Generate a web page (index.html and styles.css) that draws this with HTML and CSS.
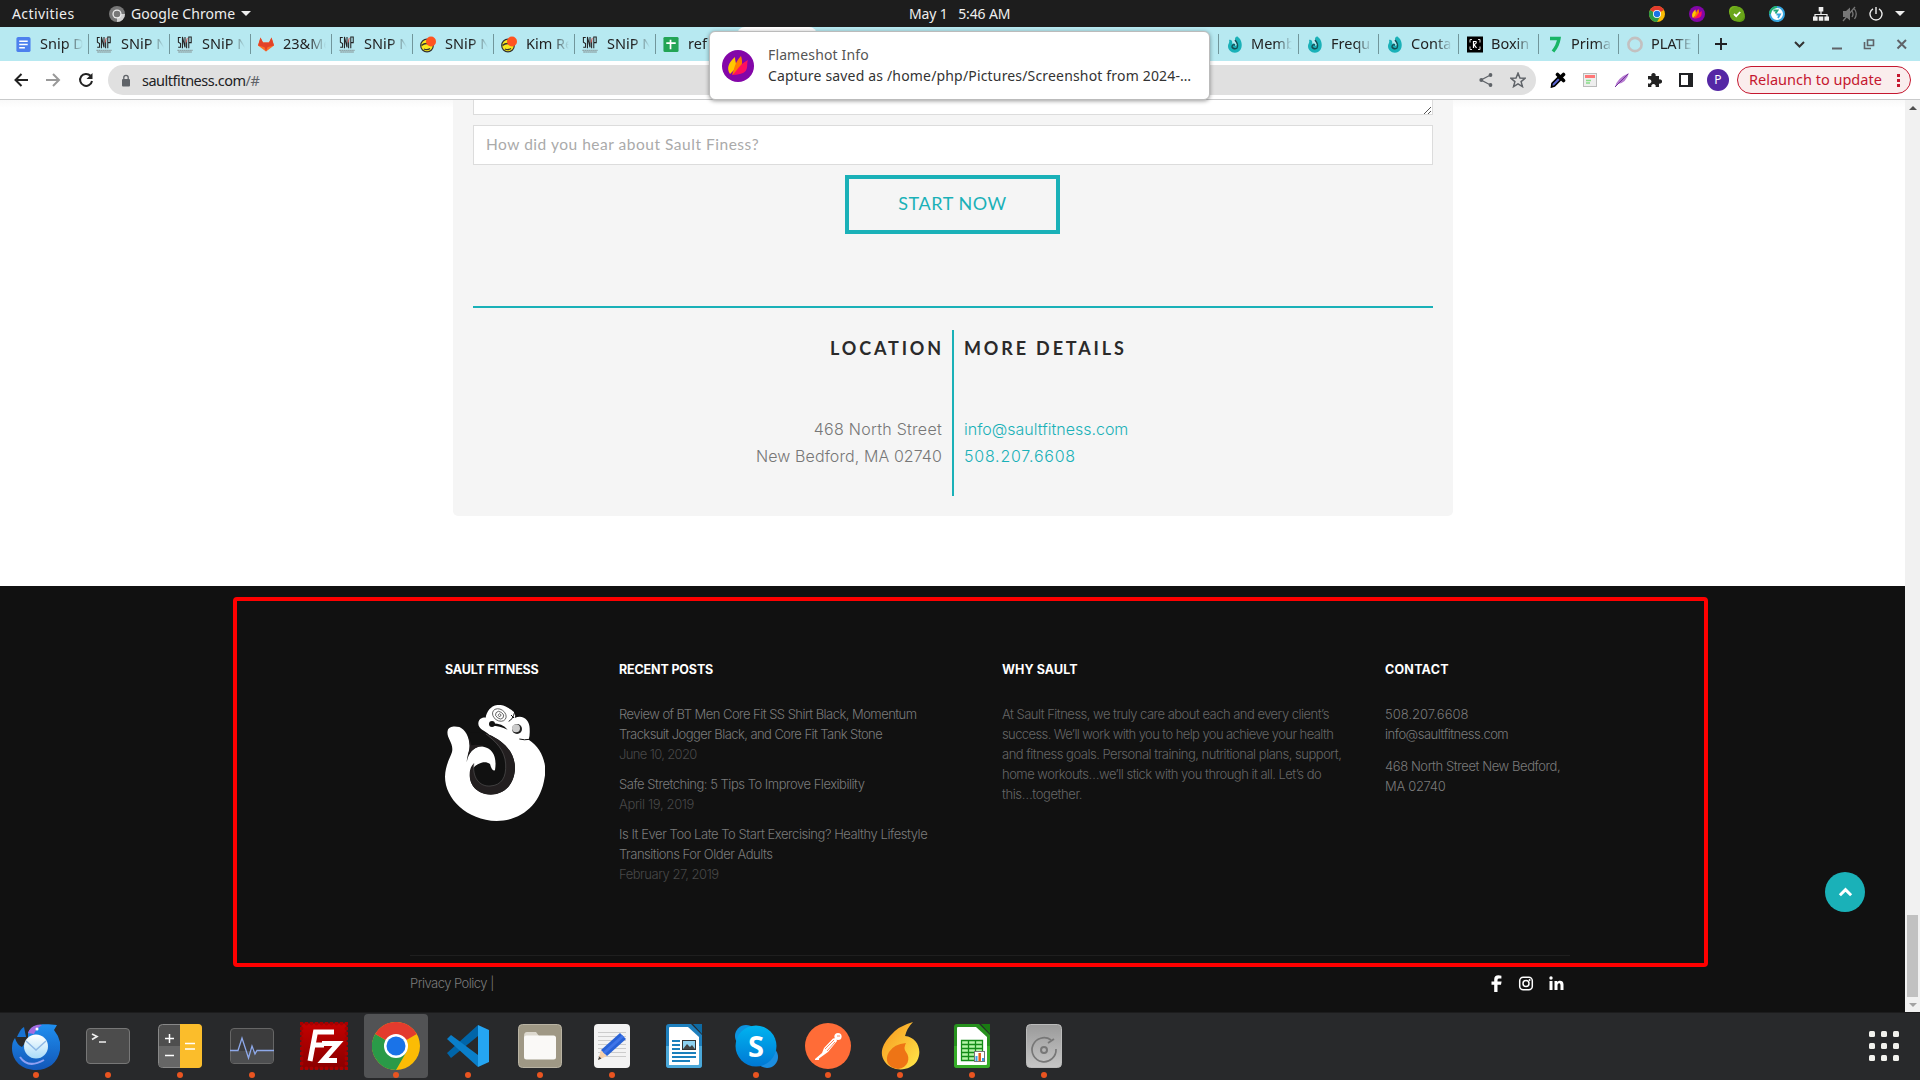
FILE: index.html
```html
<!DOCTYPE html>
<html lang="en">
<head>
<meta charset="utf-8">
<title>Sault Fitness</title>
<link rel="stylesheet" href="styles.css">
</head>
<body>
<svg class="defs" width="0" height="0">
  <defs>
    <linearGradient id="bird" x1="0" y1="0" x2="0" y2="1"><stop offset="0" stop-color="#1f8ff0"/><stop offset="1" stop-color="#1257b8"/></linearGradient>
    <linearGradient id="mail" x1="0" y1="0" x2="0" y2="1"><stop offset="0" stop-color="#ffffff"/><stop offset="1" stop-color="#a9dcf8"/></linearGradient>
    <linearGradient id="red" x1="0" y1="0" x2="0" y2="1"><stop offset="0" stop-color="#c40000"/><stop offset="1" stop-color="#8a0000"/></linearGradient>
    <linearGradient id="sky" x1="0" y1="0" x2="0" y2="1"><stop offset="0" stop-color="#00b4f0"/><stop offset="1" stop-color="#0078d4"/></linearGradient>
    <linearGradient id="fire" x1="0" y1="0" x2="1" y2="1"><stop offset="0" stop-color="#f7941d"/><stop offset="1" stop-color="#ffe94a"/></linearGradient>
    <linearGradient id="disk" x1="0" y1="0" x2="0" y2="1"><stop offset="0" stop-color="#9a9a9a"/><stop offset="1" stop-color="#c6c6c6"/></linearGradient>
    <symbol id="chrome" viewBox="0 0 48 48">
      <circle cx="24" cy="24" r="24" fill="#fbbc05"/>
      <path d="M24 24L3.2 12A24 24 0 0 0 24 48L34.4 30Z" fill="#2a9a48"/>
      <path d="M24 24L3.2 12A24 24 0 0 1 44.8 12Z" fill="#e33b2e"/>
      <circle cx="24" cy="24" r="12" fill="#fff"/><circle cx="24" cy="24" r="9.5" fill="#1a73e8"/>
    </symbol>
    <symbol id="flame" viewBox="0 0 32 32">
      <circle cx="16" cy="16" r="16" fill="#8306a8"/>
      <path d="M8 24C4 18 7 12 13 7C13 12 15 14 14 18Z" fill="#ffc800"/>
      <path d="M10 25C13 17 13 12 19 6C21 12 20 16 18 20Z" fill="#ff7a00"/>
      <path d="M10 25C15 22 16 15 26 10C24 14 28 22 18 24Q14 25 10 25Z" fill="#ff0f5f"/>
    </symbol>
    <symbol id="snip" viewBox="0 0 16 18">
      <g fill="none" stroke="#222" stroke-width="1.1"><path d="M3.5 1.5H1V6.5L3.3 8V12H.8M5.3 13V1L8 12V1M9.7 4V13M12 13V1H14.6V7H12"/></g>
      <path d="M10.5 2L9 7" stroke="#e35e5e"/><path d="M0 15.2H16M1 17H15" stroke="#8a9a9c" stroke-width="1.5" stroke-dasharray="1.5 .6"/>
    </symbol>
    <symbol id="monkey" viewBox="0 0 16 16">
      <circle cx="7" cy="9" r="6.3" fill="#f8e71c" stroke="#333" stroke-width="1.2"/><path d="M1.500 9Q6 5 12 9M4 12.5Q7 14 10 12" fill="none" stroke="#333" stroke-width="1.3"/>
      <circle cx="11" cy="5" r="5" fill="#ff5420"/>
    </symbol>
    <symbol id="hook" viewBox="0 0 14 17">
      <path d="M1 4C3 3 5 5 4 8C6 6 8 8 7 10L9 9L7 3C7 1 9 0 10 1L12 3C15 8 14 14 10 16C5 18 0 15 0 10C0 8 2 6 1 4Z" fill="#1ab1b8"/><path d="M7 4Q11 9 9 12Q6 14 4 11Q4 8 7 9" fill="none" stroke="#174e55" stroke-width="1.4"/>
    </symbol>
  </defs>
</svg>

<div class="desktop">
  <header class="topbar">
    <span class="activities">Activities</span>
    <svg class="app-dot" viewBox="0 0 16 16"><circle cx="8" cy="8" r="8" fill="#777"/><path d="M8 8H16A8 8 0 0 1 8 16Z" fill="#d0d0d0"/><circle cx="8" cy="8" r="4.6" fill="#eee"/><circle cx="8" cy="8" r="3.3" fill="#777"/></svg>
    <span class="app-name">Google Chrome</span><i class="caret"></i>
    <span class="clock">May 1 &nbsp; 5:46 AM</span>
    <div class="tray">
      <svg width="16" height="16"><use href="#chrome"/></svg>
      <svg width="16" height="16"><use href="#flame"/></svg>
      <svg width="16" height="16" viewBox="0 0 16 16"><rect width="11" height="11" rx="5" fill="#79b51c"/><rect x="5" y="5" width="11" height="11" rx="5" fill="#5d9b12"/><circle cx="8" cy="8" r="7.4" fill="#6aa61a"/><path d="M5 8L7.2 10.2L11.2 6" stroke="#fff" stroke-width="1.8" fill="none"/></svg>
      <svg width="16" height="16" viewBox="0 0 16 16"><circle cx="8" cy="8" r="7" fill="#fff" stroke="#36a5df" stroke-width="2"/><path d="M1 8A7 7 0 0 1 8 1" fill="none" stroke="#23b26d" stroke-width="2"/><path d="M4.500 4.500H8.500L6.500 7.500" fill="none" stroke="#22a77c" stroke-width="1.8"/><path d="M7.500 8.500H11L9 12" fill="none" stroke="#36a5df" stroke-width="1.8"/></svg>
      <svg class="net" width="16" height="14" viewBox="0 0 16 14"><path d="M8 4V8M2 10V7.5H14V10" fill="none" stroke="#eee" stroke-width="1.2"/><path d="M5.7 0h4.6v4.6H5.7zM0 9.5h4.6v4.2H0zM5.8 9.5h4.5v4.2H5.8zM11.4 9.5H16v4.2h-4.6z" fill="#eee"/></svg>
      <svg width="16" height="16" viewBox="0 0 16 16"><path d="M1 5H4L8 1.5V14.5L4 11H1Z" fill="#777"/><path d="M10 5Q12 8 10 11M12.5 3Q16 8 12.5 13M1 15L13 1" fill="none" stroke="#777" stroke-width="1.3"/></svg>
      <svg class="power" width="14" height="14" viewBox="0 0 14 14"><path d="M4 1.8A6 6 0 1 0 10 1.8M7 0V7" fill="none" stroke="#eee" stroke-width="1.4"/></svg>
      <i class="caret"></i>
    </div>
  </header>

  <nav class="tabs">
    <div class="tab"><svg viewBox="0 0 16 18"><rect x="1" y="1" width="15" height="16" rx="2" fill="#4d80ee"/><path d="M4 5.5H13M4 9H13M4 12.5H10" stroke="#fff" stroke-width="1.6"/></svg><span>Snip D</span></div>
    <div class="tab"><svg><use href="#snip"/></svg><span>SNiP N</span></div>
    <div class="tab"><svg><use href="#snip"/></svg><span>SNiP N</span></div>
    <div class="tab"><svg viewBox="0 0 16 16"><path d="M8 15L0 9L2.5 1L5 6H11L13.5 1L16 9Z" fill="#fc6d26"/><path d="M8 15L5 6H11Z" fill="#e24329"/><path d="M0 9L2.5 1L5 6L8 9L11 6L13.5 1L16 9L8 11Z" fill="#e24329"/></svg><span>23&amp;Me</span></div>
    <div class="tab"><svg><use href="#snip"/></svg><span>SNiP N</span></div>
    <div class="tab"><svg><use href="#monkey"/></svg><span>SNiP N</span></div>
    <div class="tab"><svg><use href="#monkey"/></svg><span>Kim Re</span></div>
    <div class="tab"><svg><use href="#snip"/></svg><span>SNiP N</span></div>
    <div class="tab bare"><svg viewBox="0 0 16 18"><rect y="1" width="16" height="16" rx="1.5" fill="#23a455"/><path d="M7.5 4V14M3 7.5H13" stroke="#fff" stroke-width="1.8"/></svg><span>ref</span></div>
    <div class="tab-active"></div>
    <div class="tab-gap"></div>
    <div class="tab late"><svg><use href="#hook"/></svg><span>Memb</span></div>
    <div class="tab late"><svg><use href="#hook"/></svg><span>Frequ</span></div>
    <div class="tab late"><svg><use href="#hook"/></svg><span>Conta</span></div>
    <div class="tab late"><svg viewBox="0 0 16 16"><rect width="16" height="16"/><path d="M6.500 11.500V5H9Q10 7 7 8L9.500 11.500" fill="none" stroke="#fff" stroke-width="1.2"/><path d="M5 3H3V6M3 10V13H5M11 3H13V6M13 10V13H11" fill="none" stroke="#ddd"/></svg><span>Boxin</span></div>
    <div class="tab late"><svg viewBox="0 0 16 16"><path d="M3 2H12Q11 9 6 15" fill="none" stroke="#18b566" stroke-width="3.4"/></svg><span>Prima</span></div>
    <div class="tab late"><svg viewBox="0 0 16 16"><circle cx="8" cy="8" r="6.6" fill="none" stroke="#c3c0c0" stroke-width="2.6"/></svg><span>PLATE</span></div>
    <svg class="plus" viewBox="0 0 12 12"><path d="M6 0V12M0 6H12" stroke="#202124" stroke-width="1.9"/></svg>
    <svg class="winctl" viewBox="0 0 120 16"><g fill="none" stroke-width="2"><path d="M2 6L6.5 10.5L11 6" stroke="#333"/><path d="M39 12.5H49" stroke="#5f6368"/><path d="M74.500 4H80.500V9.500H74.500ZM71.500 6V12.500H78" stroke="#5f6368" stroke-width="1.6"/><path d="M104.500 4L113 12.500M113 4L104.500 12.500" stroke="#5f6368"/></g></svg>
  </nav>

  <div class="toolbar">
    <svg class="arrows" viewBox="0 0 84 16"><g fill="none" stroke-width="2"><path d="M14 8H2M7.500 2L1.500 8L7.500 14" stroke="#222"/><path d="M32 8H45M39 2L45 8L39 14" stroke="#999"/><path d="M76.500 3.800A6 6 0 1 0 78 9" stroke="#222"/></g><path d="M78.500 1V7H72.500Z" fill="#222"/></svg>
    <div class="omnibox">
      <svg class="lock" viewBox="0 0 8 12"><rect y="4.500" width="8" height="7.500" rx="1" fill="#5f6368"/><path d="M1.800 5V3Q1.800 .8 4 .8T6.200 3V5" fill="none" stroke="#5f6368" stroke-width="1.300"/></svg>
      <span class="url">saultfitness.com<b>/#</b></span>
      <svg class="share" viewBox="0 0 14 14"><path d="M11.500 2L2 7L11.500 12" fill="none" stroke="#5f6368" stroke-width="1.300"/><g fill="#5f6368"><circle cx="11.500" cy="2" r="1.900"/><circle cx="2.300" cy="7" r="1.900"/><circle cx="11.500" cy="12" r="1.900"/></g></svg>
      <svg class="star" viewBox="0 0 14 14"><path d="M7 1L8.700 5.200L13.200 5.500L9.700 8.400L10.900 12.800L7 10.400L3.100 12.800L4.300 8.400L.8 5.500L5.300 5.200Z" fill="none" stroke="#5f6368" stroke-width="1.300"/></svg>
    </div>
    <div class="ext">
      <svg viewBox="0 0 16 16"><path d="M1.500 15L2 11.500L8.500 5L11 7.500L4.500 14Z" fill="#5c67d6" stroke="#000" stroke-width="1.600"/><path d="M7.500 2.500L13.500 8.500M10 6L13.500 2.500" stroke="#000" stroke-width="3.600" stroke-linecap="round"/></svg>
      <svg viewBox="0 0 16 16"><rect x="1.500" y="1.500" width="13" height="13" fill="#eee" stroke="#bbb"/><rect x="3" y="3" width="10" height="3" fill="#f77"/><path d="M4 8.500H9M4 11H8" stroke="#8d8" stroke-width="1.500"/></svg>
      <svg viewBox="0 0 16 16"><path d="M1 15Q3 6 15 1Q12 11 4 12Z" fill="#b57ad0"/><path d="M1 15L14 2" stroke="#74349b"/></svg>
      <svg viewBox="0 0 16 16"><path d="M2 4H5.500A2.200 2.200 0 1 1 9.500 4H13V7.500A2.200 2.200 0 1 1 13 11.500V15H9.500A2.200 2.200 0 1 0 5.500 15H2V11.300A2.200 2.200 0 1 0 2 7.500Z" fill="#222"/></svg>
      <svg viewBox="0 0 16 16"><path d="M2 2H14V14H2Z" fill="#fff" stroke="#202124" stroke-width="2"/><path d="M10 2H14V14H10Z" fill="#202124"/></svg>
    </div>
    <span class="avatar">P</span>
    <span class="relaunch"><em>Relaunch to update</em><i></i></span>
  </div>

  <div class="viewport">
    <main class="page">
      <section class="panel">
        <div class="textarea"><svg viewBox="0 0 8 8"><path d="M0 8L7 1M4 8L7 5" stroke="#555"/></svg></div>
        <div class="input"><span>How did you hear about Sault Finess?</span></div>
        <div class="start"><span>START NOW</span></div>
        <div class="info">
          <div class="loc"><h3>LOCATION</h3><p><span class="a1">468 North Street</span></p><p><span class="a2">New Bedford, MA 02740</span></p></div>
          <div class="more"><h3>MORE DETAILS</h3><p><span class="a3">info@saultfitness.com</span></p><p><span class="a4">508.207.6608</span></p></div>
        </div>
      </section>
      <footer class="footer">
        <div class="marked"></div>
        <div class="cols">
          <div>
            <h4 class="h-a">SAULT FITNESS</h4>
            <svg class="logo" viewBox="45 45 300 348">
              <path d="M112 125Q122 140 122 166L170 160Q200 180 196 242Q190 240 180 218L130 225L120 260L150 312L240 305L260 210L180 132Z" fill="#111"/>
              <path d="M53 122C56 108 74 108 88 111C106 118 118 142 119 168C119 180 112 194 110 217C116 186 134 166 160 170C186 174 202 198 195 240C190 245 184 238 180 222C160 208 128 226 120 252C117 288 145 313 182 313C224 314 254 282 255 235C254 180 214 150 178 134C164 122 144 116 145 100C146 86 158 82 167 83C170 64 184 42 212 45C230 48 246 60 252 66Q258 74 254 84C280 72 300 92 299 118Q300 138 296 149C334 172 352 220 344 262C332 346 272 393 200 393C110 390 45 326 45 260C46 226 60 204 66 186C72 158 48 144 53 122Z" fill="#fff"/>
              <path d="M160 128C215 145 256 185 255 235C252 285 222 314 182 314C145 313 119 288 119 255C119 236 124 228 132 220C126 262 148 290 180 288C215 286 229 262 227 222C224 180 198 155 160 128Z" fill="#231f20"/>
              <path d="M132 220C126 262 148 290 180 288C215 286 229 262 227 222C224 180 198 155 168 132" fill="none" stroke="#666" stroke-width="1.500"/>
              <path d="M116 140Q122 156 124 166Q140 162 160 168Q134 168 114 196Q120 178 119 166Z" fill="#231f20"/>
              <circle cx="186" cy="102" r="9" fill="#111"/><path d="M186 100Q215 99 233 119Q208 107 186 107Z" fill="#111"/>
              <circle cx="261" cy="117" r="15" fill="#222"/><circle cx="258" cy="115" r="12" fill="#ccc"/>
              <path d="M268 147Q284 151 298 148M254 66Q249 88 236 94M243 75L252 84" fill="none" stroke="#111" stroke-width="3"/>
              <g fill="none" stroke="#555" stroke-width="2.500" transform="rotate(35 208 75)"><ellipse cx="208" cy="75" rx="22" ry="17"/><ellipse cx="209" cy="75" rx="13" ry="10"/><circle cx="209" cy="75" r="4"/></g>
            </svg>
          </div>
          <div>
            <h4 class="h-b">RECENT POSTS</h4>
            <ul class="posts">
              <li><a class="t1">Review of BT Men Core Fit SS Shirt Black, Momentum</a><a class="t2">Tracksuit Jogger Black, and Core Fit Tank Stone</a><time class="t3">June 10, 2020</time></li>
              <li><a class="t4">Safe Stretching: 5 Tips To Improve Flexibility</a><time class="t5">April 19, 2019</time></li>
              <li><a class="t6">Is It Ever Too Late To Start Exercising? Healthy Lifestyle</a><a class="t7">Transitions For Older Adults</a><time class="t8">February 27, 2019</time></li>
            </ul>
          </div>
          <div>
            <h4 class="h-c">WHY SAULT</h4>
            <p class="why"><span class="w1">At Sault Fitness, we truly care about each and every client’s</span><span class="w2">success. We’ll work with you to help you achieve your health</span><span class="w3">and fitness goals. Personal training, nutritional plans, support,</span><span class="w4">home workouts…we’ll stick with you through it all. Let’s do</span><span class="w5">this…together.</span></p>
          </div>
          <div>
            <h4 class="h-d">CONTACT</h4>
            <p class="contact"><span class="c1">508.207.6608</span><span class="c2">info@saultfitness.com</span></p>
            <p class="contact"><span class="c3">468 North Street New Bedford,</span><span class="c4">MA 02740</span></p>
          </div>
        </div>
        <div class="legal">
          <span><a>Privacy Policy</a> |</span>
          <svg viewBox="0 0 80 18"><path d="M6.500 17V9.800H10L10.600 6.600H6.500V4.900Q6.500 3.500 8.200 3.500H10.400V.7Q3.200 -.8 3.200 4.300V6.600H.5V9.800H3.200V17Z" fill="#fff"/><rect x="28.700" y="2.200" width="12.600" height="12.600" rx="3.500" fill="none" stroke="#fff" stroke-width="1.500"/><circle cx="35" cy="8.500" r="3" fill="none" stroke="#fff" stroke-width="1.500"/><circle cx="38.600" cy="4.900" r="1" fill="#fff"/><path d="M58.500 6H61.500V15H58.500ZM63.500 6H66.300V7.300C68 5 72.500 5.300 72.500 9.500V15H69.500V10.300C69.500 7.500 66.500 7.700 66.500 10.300V15H63.500Z" fill="#fff"/><circle cx="60" cy="3" r="1.700" fill="#fff"/></svg>
        </div>
      </footer>
      <div class="totop"><svg viewBox="0 0 16 10"><path d="M2 8.500L8 2.500L14 8.500" fill="none" stroke="#fff" stroke-width="3.200"/></svg></div>
    </main>
    <div class="scrollbar"><i class="up"></i><div class="thumb"></div><i class="down"></i></div>
  </div>

  <div class="dock">
    <div class="item on"><svg viewBox="0 0 48 48"><path d="M5 15C8 8 10 6 12 5L14 15Z" fill="#1873d3"/><path d="M16 11C19 3 28 1 45 3L42 8Q50 18 48 28C46 41 36 48 24 48C10 48 0 39 0 26Q0 20 3 16Q5 23 10 25L16 17Z" fill="url(#bird)"/><path d="M16 11C19 3 26 2 30 3Q24 7 22 12Z" fill="#a36be0"/><circle cx="25" cy="7" r="1.500" fill="#fff"/><path d="M8 35Q16 47 32 38" stroke="#8fa0f2" stroke-width="2" fill="none"/><circle cx="24" cy="24.500" r="12" fill="url(#mail)"/><path d="M14 19L24 28L34 19" fill="none" stroke="#8eb8e6" stroke-width="1.500"/></svg></div>
    <div class="item on"><svg viewBox="0 0 48 48"><rect x="2.500" y="6.500" width="43" height="35" rx="3.500" fill="#4c4c4c" stroke="#777"/><path d="M8 12L13 14.500L8 17.500M15 20H22" stroke="#eee" stroke-width="1.700" fill="none"/></svg></div>
    <div class="item on"><svg viewBox="0 0 48 48"><rect x="2.500" y="2.500" width="43" height="43" rx="4" fill="#4e4e4e" stroke="#888"/><path d="M3 24H24V45H6Q3 45 3 42Z" fill="#666"/><path d="M24 2H42Q46 2 46 6V42Q46 46 42 46H24Z" fill="#fbbd2b"/><path d="M9 16.500H18M13.500 12V21M9 33.500H18M29 21.500H39M29 27H39" stroke="#fff" stroke-width="1.500"/></svg></div>
    <div class="item on"><svg viewBox="0 0 48 48"><rect x="2.500" y="6.500" width="43" height="35" rx="3.500" fill="#3c3c3d" stroke="#666"/><path d="M3 29H45V38Q45 41 42 41H6Q3 41 3 38Z" fill="#4d4e50"/><path d="M2 28.500H10L14 16L20.500 36L24 24L27 32L29 28.500H46" stroke="#8ea9ea" stroke-width="1.300" fill="none"/></svg></div>
    <div class="item"><svg viewBox="0 0 48 48"><rect x="1.500" y="1.500" width="45" height="45" fill="url(#red)"/><rect x="1.500" y="1.500" width="45" height="45" fill="none" stroke="#a80000" stroke-width="4" stroke-linecap="round" stroke-dasharray="0 5"/><g stroke="#fff" fill="none"><path d="M10 39L15.500 10H34M13 23H24" stroke-width="5"/><path d="M22 21.500H38L23 38.500H37" stroke-width="5"/></g></svg></div>
    <div class="item on current"><svg><use href="#chrome"/></svg></div>
    <div class="item on"><svg viewBox="0 0 48 48"><path d="M3 31L34 3V14L7 36Z" fill="#0065a9"/><path d="M3 17L7 13L34 33V45Z" fill="#0a7fca"/><path d="M34 3L45 8V40L34 45Z" fill="#25a5f2"/></svg></div>
    <div class="item on"><svg viewBox="0 0 48 48"><rect x="2.500" y="2.500" width="43" height="43" rx="4" fill="#9f9885" stroke="#b9b3a3"/><path d="M8 14Q8 10 11 10H20L23 14H38V25H8Z" fill="#ddd9cf"/><rect x="8" y="13.500" width="32" height="24" rx="2.500" fill="#faf9f7"/></svg></div>
    <div class="item on"><svg viewBox="0 0 48 48"><rect x="6" y="2" width="36" height="44" rx="4" fill="#f3f3f3"/><path d="M10 10.500H38M10 14.500H38M10 18.500H38M10 22.500H38M10 26.500H38M10 30.500H38M10 34.500H38" stroke="#ccc"/><path d="M10 38L13 28L19 34Z" fill="#f5cfa9"/><path d="M10 38L11.200 34.500L13.500 36.500Z" fill="#444"/><path d="M13 28L32 11L38 17L19 34Z" fill="#2962d6"/><path d="M15 30L34 13L36 15L17 32Z" fill="#3f74e8"/></svg></div>
    <div class="item"><svg viewBox="0 0 48 48"><path d="M6 5Q6 2 9 2H31L42 13V43Q42 46 39 46H9Q6 46 6 43Z" fill="#1e7fbd"/><path d="M6 24H42V43Q42 46 39 46H9Q6 46 6 43Z" fill="#4ba8d9"/><path d="M9 6Q9 5 10 5H28L39 15V42Q39 43 38 43H9Z" fill="#fff"/><path d="M33 2H42V12Z" fill="#0e6aa3"/><path d="M12 19H20M12 23H20M12 27H20M12 31H36M12 35H36M12 39H30" stroke="#1b80bc" stroke-width="1.800"/><rect x="22.500" y="18.500" width="13" height="9" fill="#8ed1f0" stroke="#333"/><path d="M23 27L27 22L30 25L32 23L35 27Z" fill="#444"/></svg></div>
    <div class="item on"><svg viewBox="0 0 48 48"><circle cx="14" cy="14" r="11" fill="#0d93df"/><circle cx="35" cy="35" r="11" fill="#1b8de0"/><circle cx="24" cy="24" r="20.500" fill="url(#sky)"/><text x="24" y="34.500" text-anchor="middle" font-family="Open Sans" font-weight="700" font-size="29" fill="#fff">S</text></svg></div>
    <div class="item on"><svg viewBox="0 0 48 48"><circle cx="24" cy="24" r="23" fill="#ff6c37"/><circle cx="34" cy="14.500" r="3.600" fill="#fff"/><path d="M32 16L29 16.500L20 26L18 31L11 37V38H15V36.500L24 30L33 19Z" fill="#fff"/><path d="M21 27L30 18M23 29L31 20M33 14H36" stroke="#ff6c37" stroke-width=".8"/></svg></div>
    <div class="item on"><svg viewBox="0 0 48 48"><path d="M37 0Q22 4 14 14C6 23 3 32 9 40C16 50 34 50 41 39C47 28 41 15 29 14Q31 6 37 0Z" fill="url(#fire)"/><path d="M30 21Q18 22 13 30C8 38 12 46 22 47C32 46 35 36 30 30Q27 26 30 21Z" fill="#ee7415"/></svg></div>
    <div class="item on"><svg viewBox="0 0 48 48"><path d="M6 5Q6 2 9 2H31L42 13V43Q42 46 39 46H9Q6 46 6 43Z" fill="#27911e"/><path d="M6 24H42V43Q42 46 39 46H9Q6 46 6 43Z" fill="#37ad29"/><path d="M9 6Q9 5 10 5H28L39 15V42Q39 43 38 43H9Z" fill="#fff"/><path d="M33 2H42V12Z" fill="#197a12"/><path d="M13.500 18.500H34.500V38.500H13.500ZM13.500 22.500H34.500M13.500 26.500H34.500M13.500 30.500H34.500M13.500 34.500H34.500M20.500 18.500V38.500M27.500 18.500V38.500" fill="#b5f5a8" stroke="#148c18" stroke-width="1.300"/><rect x="26.500" y="29.500" width="10" height="10" fill="#fff" stroke="#777"/><path d="M28.500 34V39M35 36V39" stroke="#38a1e8" stroke-width="2"/><path d="M31.700 31V39" stroke="#e65e13" stroke-width="2.500"/></svg></div>
    <div class="item on"><svg viewBox="0 0 48 48"><rect x="6.500" y="2.500" width="35" height="43" rx="4" fill="url(#disk)" stroke="#bbb"/><path d="M31 18A12 12 0 1 0 36 27" fill="none" stroke="#777" stroke-width="1.700"/><path d="M28 21L34 17" stroke="#777" stroke-width="1.700"/><circle cx="24" cy="28" r="3" fill="none" stroke="#777" stroke-width="2"/></svg></div>
    <div class="apps"><i></i><i></i><i></i><i></i><i></i><i></i><i></i><i></i><i></i></div>
  </div>

  <aside class="toast">
    <svg><use href="#flame"/></svg>
    <div><p class="n1">Flameshot Info</p><p class="n2">Capture saved as /home/php/Pictures/Screenshot from 2024-…</p></div>
  </aside>
</div>
</body>
</html>
```

FILE: styles.css
```css
* { box-sizing: border-box; }
html, body { margin: 0; }
body { width: 1920px; height: 1080px; overflow: hidden; font-family: "Noto Sans", sans-serif; font-size: 14px; }
p, h3, h4, ul { margin: 0; padding: 0; font-weight: inherit; }
svg { display: block; flex: none; }
span, a, time, h3, h4, p { white-space: nowrap; }
.defs { position: absolute; }
.desktop { position: relative; display: flex; flex-direction: column; width: 1920px; height: 1080px; }

/* system bar */
.topbar { position: relative; display: flex; align-items: center; height: 27px; background: #1d1d1d; color: #eee; padding-left: 12px; }
.activities { width: 97px; letter-spacing: .42px; }
.app-dot { width: 16px; height: 16px; margin-right: 6px; }
.app-name { letter-spacing: .06px; }
.caret { border: 5px solid transparent; border-top-color: #eee; border-bottom: 0; margin-left: 6px; }
.clock { position: absolute; left: 909px; letter-spacing: -.13px; }
.tray { display: flex; align-items: center; margin-left: auto; padding-right: 15px; gap: 24px; }
.tray .net { margin-left: 4px; }
.tray .net ~ svg { margin-left: -11px; }
.tray .net ~ .power { margin-left: -12.5px; }
.tray .caret { margin-left: -12px; }

/* browser tabs */
.tabs { display: flex; align-items: center; height: 34px; background: #b7e9f1; padding-left: 8px; color: #222; }
.tab { display: flex; align-items: center; flex: none; width: 81px; height: 20px; border-right: 1px solid #71969b; padding-left: 7px; overflow: hidden; }
.tab.late { width: 80px; padding-left: 8px; }
.tab.bare { border-color: transparent; }
.tab svg { width: 16px; height: 17px; margin-right: 9px; }
.tab.late svg { margin-right: 8px; }
.tab span { width: 43px; overflow: hidden; font-size: 14.5px; line-height: 18px; height: 20px; -webkit-mask-image: linear-gradient(90deg, #000 60%, transparent); mask-image: linear-gradient(90deg, #000 60%, transparent); }
.tab.late span { width: 41px; }
.tab-active { flex: none; width: 80px; height: 34px; background: #fff; border-radius: 8px 8px 0 0; }
.tab-gap { flex: none; width: 402px; height: 20px; border-right: 1px solid #71969b; }
.plus { width: 12px; height: 12px; margin-left: 16px; }
.winctl { width: 120px; height: 16px; margin-left: 66px; }

/* address bar */
.toolbar { display: flex; align-items: center; height: 39px; background: #fff; border-bottom: 1px solid #c9cacb; padding-left: 14px; }
.arrows { width: 84px; height: 16px; }
.omnibox { display: flex; align-items: center; width: 1428px; height: 30px; margin-left: 10px; border-radius: 15px; background: #e0e0e0; padding-left: 14px; }
.lock { width: 8px; height: 13px; }
.url { margin-left: 12px; color: #202124; font-size: 14.5px; letter-spacing: -.48px; }
.url b { font-weight: 400; color: #5f6368; }
.share { width: 14px; height: 14px; margin-left: auto; }
.star { width: 16px; height: 16px; margin: 0 10px 0 17px; }
.ext { display: flex; gap: 16px; margin-left: 14px; }
.ext svg { width: 16px; height: 16px; }
.avatar { width: 22px; height: 22px; margin-left: 13px; border-radius: 50%; background: #5527a5; color: #fff; text-align: center; font-size: 12px; line-height: 22px; }
.relaunch { display: flex; align-items: center; width: 174px; height: 28px; margin-left: 8px; border: 1px solid #c5172f; border-radius: 14px; background: #faeded; color: #c5172f; padding-left: 11px; }
.relaunch em { width: 133px; font-style: normal; font-size: 14.5px; line-height: 18px; height: 20px; }
.relaunch i { width: 3px; height: 3px; margin-left: 15px; background: #c5172f; box-shadow: 0 -5px #c5172f, 0 5px #c5172f; }

/* web page */
.viewport { display: flex; height: 912px; }
.page { position: relative; width: 1905px; background: linear-gradient(#f9f9f9, #fff 8px); }
.panel { width: 1000px; height: 416px; margin-left: 453px; padding: 0 20px; border-radius: 0 0 5px 5px; background: #f5f5f5; }
.textarea, .input { border: 1px solid #dcdcdc; background: #fff; }
.textarea { display: flex; align-items: end; justify-content: end; height: 15px; border-top: 0; }
.textarea svg { width: 8px; height: 8px; }
.input { display: flex; align-items: center; height: 40px; margin-top: 10px; padding: 0 0 2px 12px; font: 15.5px Lato, sans-serif; letter-spacing: .52px; color: #aaa; }
.start { display: flex; align-items: center; justify-content: center; width: 215px; height: 59px; margin: 10px auto 0 372px; border: 4px solid #1ab1b8; color: #1ab1b8; font: 18px Lato, sans-serif; letter-spacing: .55px; padding-bottom: 4px; }
.info { display: flex; margin-top: 72px; padding-top: 22px; border-top: 2px solid #1ab1b8; }
.loc, .more { height: 166px; padding-top: 7px; }
.loc { width: 481px; padding-right: 10px; border-right: 2px solid #1ab1b8; text-align: right; color: #777; }
.more { padding-left: 10px; color: #1ab1b8; }
.info h3 { height: 79px; color: #2a2a2a; font: 700 18px/22px Lato, sans-serif; letter-spacing: 2.85px; }
.info .loc h3 { margin-right: -2px; }
.info p { height: 27px; font: 300 16px/27px Inter, sans-serif; }
.a1 { letter-spacing: .27px; }
.a2 { letter-spacing: .09px; }
.a4 { letter-spacing: .77px; }

.footer { position: relative; height: 426px; margin-top: 70px; background: #111; font: 300 13px/20px Inter, sans-serif; color: #7b7b7b; }
.marked { position: absolute; left: 233px; top: 11px; width: 1475px; height: 370px; border: 4px solid #f00; border-radius: 4px; }
.cols { display: grid; grid-template-columns: 174px 383px 383px 185px; width: 1160px; height: 370px; margin-left: 410px; padding: 74px 0 0 35px; border-bottom: 1px solid #1f1f1f; }
.cols h4 { height: 44px; color: #fff; font: 700 12.5px/20px Inter, sans-serif; }
.h-a { letter-spacing: -.2px; }
.h-b { letter-spacing: -.15px; }
.h-c { letter-spacing: .07px; }
.h-d { letter-spacing: .24px; }
.logo { width: 100px; height: 116px; margin-top: 1px; }
.posts { list-style: none; }
.posts li { margin-bottom: 10px; }
.posts a, .posts time, .why span, .contact span { display: block; width: max-content; height: 20px; }
.posts time { color: #484848; }
.t1 { letter-spacing: -.54px; }
.t2 { letter-spacing: -.57px; }
.t3 { letter-spacing: -.64px; }
.t4 { letter-spacing: -.48px; }
.t5 { letter-spacing: -.35px; }
.t6 { letter-spacing: -.45px; }
.t7 { letter-spacing: -.48px; }
.t8 { letter-spacing: -.47px; }
.why { color: #666; }
.w1 { letter-spacing: -.52px; }
.w2 { letter-spacing: -.59px; }
.w3 { letter-spacing: -.49px; }
.w4 { letter-spacing: -.51px; }
.w5 { letter-spacing: -.4px; }
.c2 { letter-spacing: -.49px; }
.c3 { letter-spacing: -.42px; }
.c4 { letter-spacing: -.3px; }
.contact { margin-bottom: 12px; }
.legal { display: flex; justify-content: space-between; align-items: center; margin-left: 410px; width: 1164px; height: 55px; }
.legal span { letter-spacing: -.52px; padding-bottom: 2px; }
.legal svg { width: 80px; height: 18px; margin-right: 3px; }
.totop { position: absolute; left: 1825px; top: 772px; display: grid; place-items: center; width: 40px; height: 40px; border-radius: 50%; background: #1ab1b8; }
.totop svg { width: 15px; height: 10px; }
.scrollbar { display: flex; flex-direction: column; align-items: center; width: 15px; background: #f1f1f1; }
.scrollbar i { border: 4px solid transparent; }
.up { margin-top: 2px; border-bottom-color: #505050 !important; }
.thumb { width: 11px; height: 82px; margin-top: 805px; background: #c1c1c1; }
.down { margin-top: 6px; border-top-color: #a3a3a3 !important; }

/* dock */
.dock { display: flex; height: 68px; background: #28292b; border-top: 1px solid #1c1c1d; }
.item { position: relative; width: 64px; height: 64px; margin: 1px 4px 0; padding: 8px; border-radius: 4px; }
.item svg { width: 48px; height: 48px; }
.item.current { background: #525355; }
.item.on::after { content: ""; position: absolute; left: 29px; bottom: 0; width: 6px; height: 6px; border-radius: 50%; background: #e95420; }
.apps { display: grid; grid-template-columns: repeat(3, 6px); gap: 6px; margin: 18px 21px 0 auto; align-content: start; }
.apps i { height: 6px; border-radius: 1.5px; background: #f2f2ee; }

/* notification */
.toast { position: absolute; left: 709px; top: 31px; display: flex; align-items: center; width: 501px; height: 69px; border: 1px solid #bbb; border-radius: 6px; background: #fff; box-shadow: 0 1px 4px #0006; padding-left: 12px; }
.toast svg { width: 32px; height: 32px; margin-right: 14px; }
.toast div { padding-bottom: 2px; }
.toast p { height: 21px; line-height: 21px; color: #333; }
.toast .n1 { color: #555; letter-spacing: .13px; }
.toast .n2 { letter-spacing: .17px; }
```
